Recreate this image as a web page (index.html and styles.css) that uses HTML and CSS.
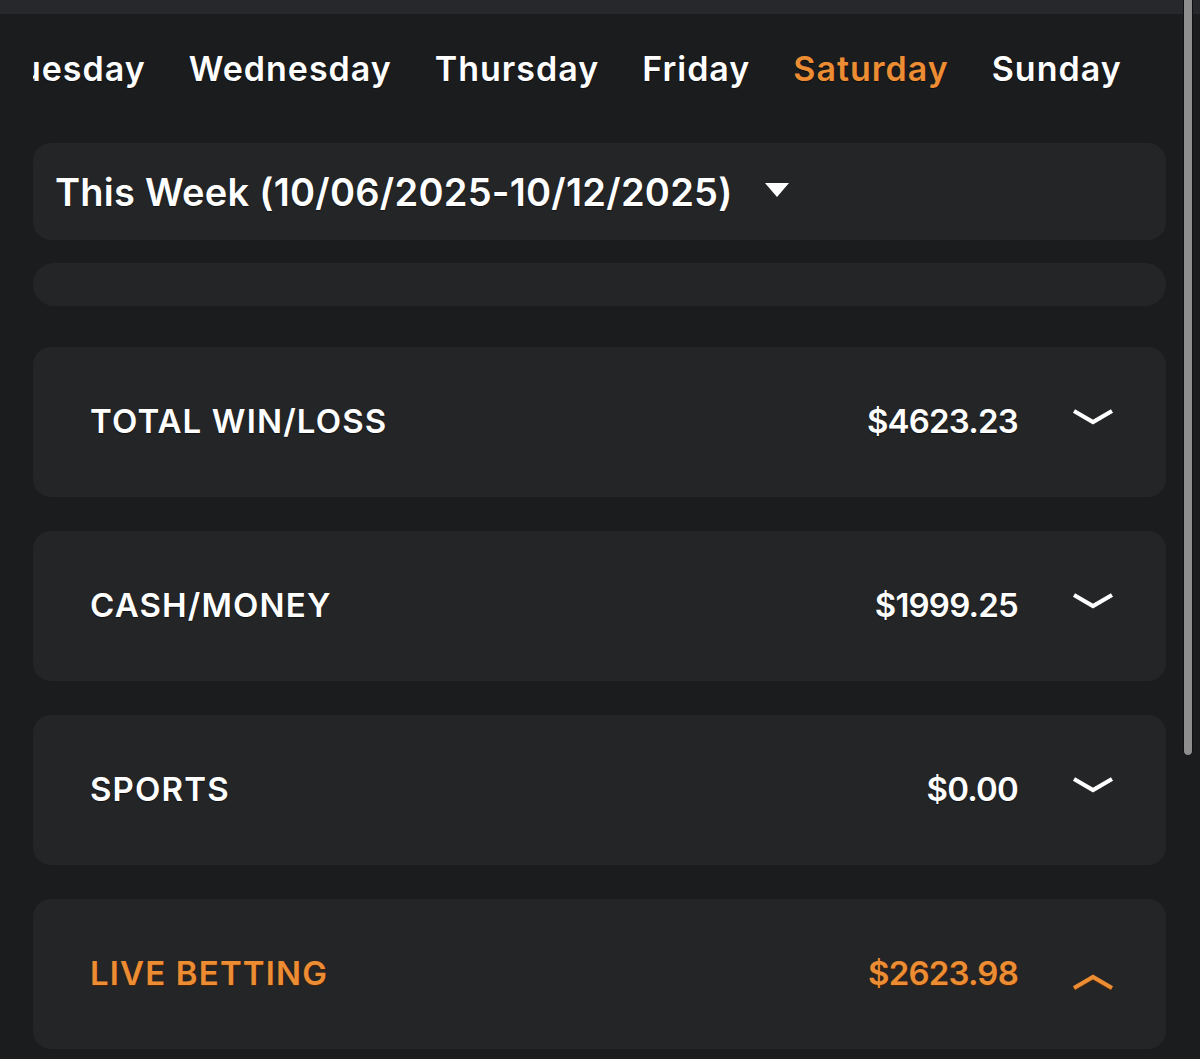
FILE: index.html
```html
<!DOCTYPE html>
<html>
<head>
<meta charset="utf-8">
<link rel="stylesheet" href="styles.css">
</head>
<body>
<div class="topbar"></div>
<main class="page">
  <nav class="days">
    <div class="days-row">
      <span class="day first">Tuesday</span>
      <span class="day">Wednesday</span>
      <span class="day">Thursday</span>
      <span class="day">Friday</span>
      <span class="day active">Saturday</span>
      <span class="day">Sunday</span>
    </div>
  </nav>
  <div class="card week">
    <span class="week-text">This Week (10/06/2025-10/12/2025)</span>
    <span class="caret"></span>
  </div>
  <div class="card blank"></div>
  <section class="rows">
    <div class="card row">
      <span class="label">TOTAL WIN/LOSS</span>
      <span class="value">$4623.23</span>
      <svg class="chev down" width="42" height="18" viewBox="0 0 42 18"><path d="M2 3 L21 14 L40 3" fill="none" stroke="#fff" stroke-width="4.2" stroke-linejoin="miter"/></svg>
    </div>
    <div class="card row">
      <span class="label">CASH/MONEY</span>
      <span class="value">$1999.25</span>
      <svg class="chev down" width="42" height="18" viewBox="0 0 42 18"><path d="M2 3 L21 14 L40 3" fill="none" stroke="#fff" stroke-width="4.2" stroke-linejoin="miter"/></svg>
    </div>
    <div class="card row">
      <span class="label">SPORTS</span>
      <span class="value">$0.00</span>
      <svg class="chev down" width="42" height="18" viewBox="0 0 42 18"><path d="M2 3 L21 14 L40 3" fill="none" stroke="#fff" stroke-width="4.2" stroke-linejoin="miter"/></svg>
    </div>
    <div class="card row open">
      <span class="label">LIVE BETTING</span>
      <span class="value">$2623.98</span>
      <svg class="chev up" width="42" height="18" viewBox="0 0 42 18"><path d="M2 15 L21 4 L40 15" fill="none" stroke="#ec8c33" stroke-width="4.2" stroke-linejoin="miter"/></svg>
    </div>
  </section>
</main>
<div class="scrollthumb"></div>
</body>
</html>
```
FILE: styles.css
```css
html, body {
  margin: 0;
  padding: 0;
  background: #1b1c1e;
  overflow: hidden;
}
body {
  font-family: Inter, "Liberation Sans", sans-serif;
  color: #ffffff;
  width: 1200px;
  height: 1059px;
}
.topbar {
  height: 14px;
  background: #27282b;
}
.page {
  padding: 0 34px 0 33px;
}
.days {
  margin-top: 35px;
  height: 40px;
  overflow: hidden;
}
.days-row {
  display: flex;
  gap: 43px;
  white-space: nowrap;
  margin-left: -34px;
}
.day {
  font-size: 34px;
  line-height: 40px;
  font-weight: 600;
  letter-spacing: 1px;
  text-shadow: 0 1px 1px rgba(0,0,0,0.5);
}
.day.active {
  color: #ec8c33;
}
.card {
  background: #242527;
  border-radius: 18px;
}
.week {
  margin-top: 54px;
  height: 97px;
  display: flex;
  align-items: center;
  padding-left: 22px;
}
.week-text {
  font-size: 38px;
  font-weight: 600;
  letter-spacing: 0.25px;
  text-shadow: 0 1px 1px rgba(0,0,0,0.5);
}
.caret {
  margin-left: 32px;
  margin-top: -4px;
  width: 0;
  height: 0;
  border-left: 12px solid transparent;
  border-right: 12px solid transparent;
  border-top: 14px solid #fff;
}
.blank {
  margin-top: 23px;
  height: 43px;
  border-radius: 21px;
}
.rows {
  margin-top: 41px;
  display: flex;
  flex-direction: column;
  gap: 34px;
}
.row {
  height: 150px;
  display: flex;
  align-items: center;
  padding: 0 52px 0 57px;
}
.label {
  flex: 1;
  font-size: 33px;
  font-weight: 600;
  letter-spacing: 1.15px;
  margin-top: -3px;
  text-shadow: 0 1px 1px rgba(0,0,0,0.5);
}
.value {
  font-size: 33px;
  font-weight: 600;
  letter-spacing: -0.8px;
  margin-top: -3px;
  text-shadow: 0 1px 1px rgba(0,0,0,0.5);
}
.chev {
  margin-left: 54px;
}
.chev.down {
  margin-top: -10px;
}
.chev.up {
  margin-top: 16px;
  filter: drop-shadow(0 1px 0 rgba(90,40,0,0.8));
}
.open .label, .open .value {
  color: #ec8c33;
  text-shadow: 0 1px 1px rgba(80,35,0,0.9);
}
.scrollthumb {
  position: fixed;
  top: 0;
  left: 1183px;
  width: 8px;
  height: 755px;
  background: #8e8e8e;
  border: 1px solid #111;
  border-top: none;
  border-radius: 0 0 5px 5px;
}
```
